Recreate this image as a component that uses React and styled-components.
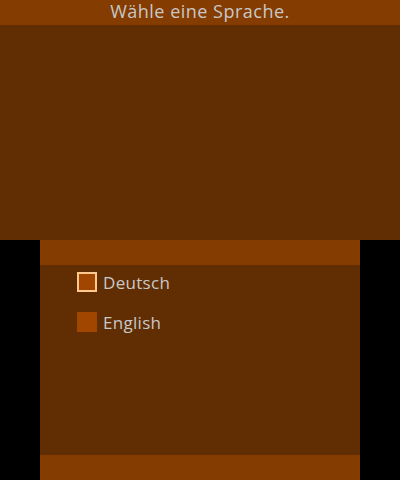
import styled, { createGlobalStyle } from 'styled-components';

const Global = createGlobalStyle`
  html, body {
    margin: 0;
    padding: 0;
    background: #000;
  }
`;

const Device = styled.div`
  width: 400px;
  height: 480px;
  display: flex;
  flex-direction: column;
  align-items: center;
  background: #000;
  font-family: "Open Sans", "Liberation Sans", sans-serif;
`;

const Screen = styled.div`
  width: ${(p) => p.width}px;
  height: 240px;
  display: flex;
  flex-direction: column;
  background: #602e02;
`;

const Bar = styled.div`
  height: 25px;
  flex: none;
  box-sizing: border-box;
  padding-bottom: 3px;
  display: flex;
  align-items: center;
  justify-content: center;
  background: #843c00;
  color: #c8c8c8;
  font-size: 18px;
  letter-spacing: 0.5px;
`;

const Body = styled.div`
  flex: 1;
`;

const List = styled.div`
  flex: 1;
  display: flex;
  flex-direction: column;
  gap: 20px;
  padding: 7px 0 0 37px;
`;

const Option = styled.div`
  display: flex;
  align-items: center;
  gap: 6px;
  height: 20px;
  color: #c8c8c8;
  font-size: 17px;
  letter-spacing: 0.3px;
`;

const Box = styled.span`
  width: 20px;
  height: 20px;
  box-sizing: border-box;
  background: #a04600;
  border: ${(p) => (p.selected ? '2px solid #ffc890' : 'none')};
`;

const languages = ['Deutsch', 'English'];

const App = () => {
  return (
    <Device>
      <Global />
      <Screen width={400}>
        <Bar>Wähle eine Sprache.</Bar>
        <Body />
      </Screen>
      <Screen width={320}>
        <Bar />
        <List>
          {languages.map((lang, i) => (
            <Option key={lang}>
              <Box selected={i === 0} />
              {lang}
            </Option>
          ))}
        </List>
        <Bar />
      </Screen>
    </Device>
  );
};

export default App;
